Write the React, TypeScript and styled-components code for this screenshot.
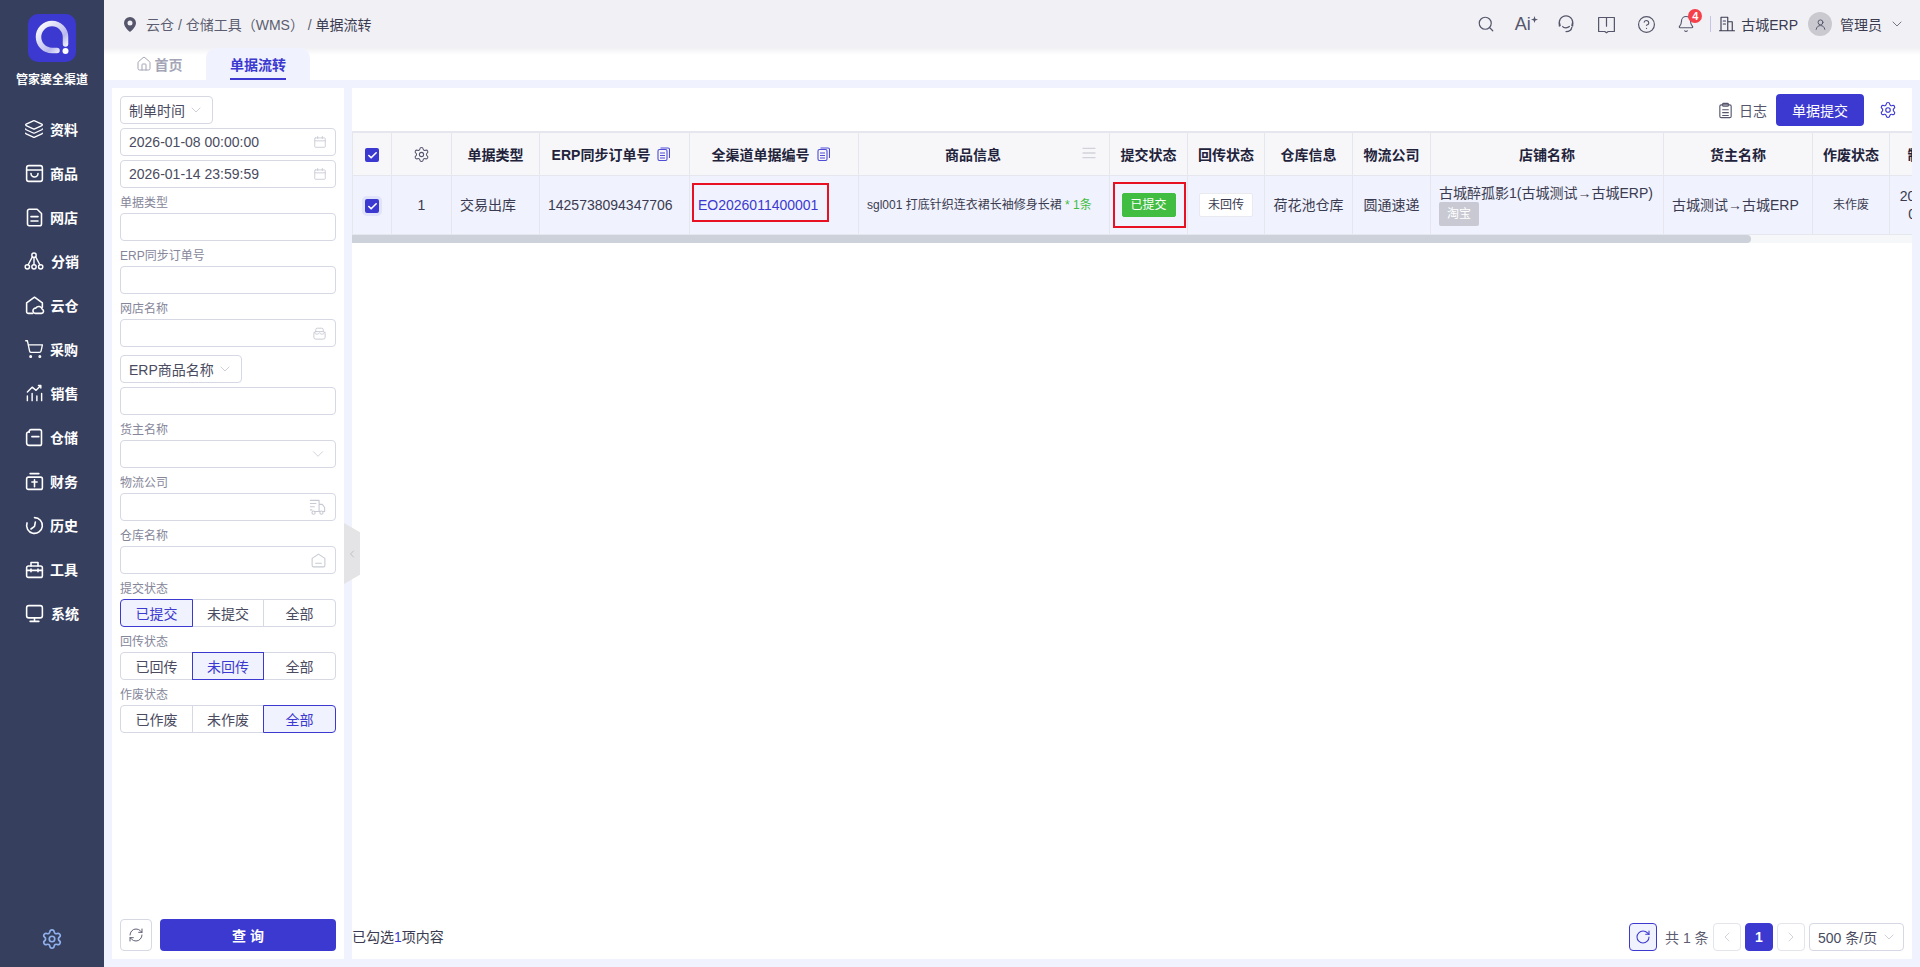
import React from 'react';
import styled, { createGlobalStyle } from 'styled-components';
import { Search, CircleHelp, Bell, ShoppingCart, Layers, ChevronDown, ChevronLeft, ChevronRight, Settings, RefreshCw, RotateCw, Check, House } from 'lucide-react';

const BLUE = '#3c39d0';
const PALE = '#f0f2fd';
const LINE = '#d6d8e3';
const TEXT = '#3a3b50';
const FONT = '"Liberation Sans", "Noto Sans CJK SC", sans-serif';

const Global = createGlobalStyle`
  html, body { margin: 0; padding: 0; height: 100%; overflow: hidden; }
  body { font-family: ${FONT}; font-size: 14px; color: ${TEXT}; background: ${PALE}; }
  * { box-sizing: border-box; }
`;

const Page = styled.div`display: flex; height: 967px; width: 1920px; overflow: hidden;`;

/* ---------- sidebar ---------- */
const Sidebar = styled.aside`
  width: 104px; flex: none; background: #373f5f; color: #fff;
  display: flex; flex-direction: column; align-items: center; padding: 14px 0 17px;
`;
const LogoBox = styled.div`
  width: 48px; height: 48px; border-radius: 10px; background: ${BLUE};
  display: flex; align-items: center; justify-content: center;
`;
const Brand = styled.div`font-size: 12px; font-weight: 700; line-height: 14px; margin: 11px 0 20px; white-space: nowrap;`;
const Nav = styled.nav`display: flex; flex-direction: column; width: 100%;`;
const NavItem = styled.div`
  height: 44px; display: flex; align-items: center; justify-content: center; gap: 8px;
  font-size: 14px; font-weight: 700; color: #fff;
`;
const NavIcon = styled.span<{ $w?: number }>`
  width: ${p => p.$w ?? 16}px; height: 20px; flex: none; display: flex; align-items: center; justify-content: center;
  svg { flex: none; }
`;
const SideFoot = styled.div`margin-top: auto; color: #8fb2ee; height: 22px; display: flex;`;

/* ---------- top ---------- */
const Column = styled.div`flex: 1; min-width: 0; display: flex; flex-direction: column;`;
const Topbar = styled.header`
  height: 48px; flex: none; background: #f1f1f5; display: flex; align-items: center;
  padding: 0 15px 0 20px;
`;
const Crumbs = styled.div`display: flex; align-items: center; gap: 10px; color: #5c5d70; font-size: 14px; white-space: pre;`;
const CrumbNow = styled.span`color: #3a3b50;`;
const TopRight = styled.div`margin-left: auto; display: flex; align-items: center;`;
const TopSlot = styled.div`
  width: 40px; height: 32px; display: flex; align-items: center; justify-content: center;
  position: relative; color: #55566c;
`;
const AiMark = styled.span`font-size: 18px; line-height: 20px; color: #55566c; letter-spacing: 0;`;
const Badge = styled.span`
  position: absolute; left: 22px; top: 1px; width: 14px; height: 14px; border-radius: 50%;
  background: #f5404a; color: #fff; font-size: 11px; font-weight: 700; line-height: 14px; text-align: center;
`;
const Divider = styled.span`width: 1px; height: 16px; background: #c3c6e2; margin: 0 7px 0 4px;`;
const OrgName = styled.span`margin-left: 5px; font-size: 14px; color: #3a3b50; white-space: nowrap;`;
const Avatar = styled.span`
  width: 24px; height: 24px; border-radius: 50%; background: #c9c9cf; margin-left: 10px; color: #55566c;
  display: flex; align-items: center; justify-content: center;
`;
const UserName = styled.span`margin: 0 7px 0 8px; color: #3a3b50; white-space: nowrap;`;

const TabRow = styled.div`
  height: 32px; flex: none; display: flex; padding-left: 20px; gap: 12px;
  background: linear-gradient(#f1f1f5 0, #fff 7px, #fff 100%);
`;
const Tab = styled.div<{ $active?: boolean }>`
  display: flex; align-items: center; justify-content: center; gap: 3px; height: 32px;
  width: ${p => (p.$active ? 104 : 70)}px; border-radius: 10px 10px 0 0; font-weight: 700; font-size: 14px;
  color: ${p => (p.$active ? BLUE : '#a3a5b6')};
  background: ${p => (p.$active ? PALE : 'transparent')};
  position: relative;
`;
const TabBar = styled.span`position: absolute; left: 24px; right: 24px; bottom: 0; height: 2px; background: ${BLUE};`;

/* ---------- content ---------- */
const Content = styled.div`flex: 1; min-height: 0; display: flex; gap: 8px; padding: 8px; background: ${PALE};`;
const Filter = styled.section`
  width: 232px; flex: none; background: #fff; padding: 8px; display: flex; flex-direction: column; position: relative;
`;
const Field = styled.div<{ $gap?: number }>`
  height: 28px; flex: none; border: 1px solid ${LINE}; border-radius: 4px; background: #fff; width: 100%;
  display: flex; align-items: center; padding: 0 8px; margin-top: ${p => p.$gap ?? 0}px;
  color: #4a4b60; font-size: 14px; white-space: nowrap;
`;
const Picker = styled(Field)`width: auto; align-self: flex-start; gap: 3px;`;
const FieldIcon = styled.span`margin-left: auto; display: flex; color: #c8cad3;`;
const Label = styled.div`height: 25px; flex: none; font-size: 12px; line-height: 18px; padding-top: 6px; color: #85869a;`;
const Segments = styled.div`display: grid; grid-template-columns: 73px 71px 72px; flex: none; height: 28px;`;
const Seg = styled.div<{ $on?: boolean; $pos: 'l' | 'm' | 'r' }>`
  display: flex; align-items: center; justify-content: center; font-size: 14px;
  border: 1px solid ${p => (p.$on ? BLUE : LINE)};
  margin-left: ${p => (p.$pos === 'l' ? 0 : -1)}px; z-index: ${p => (p.$on ? 1 : 0)};
  border-radius: ${p => (p.$pos === 'l' ? '4px 0 0 4px' : p.$pos === 'r' ? '0 4px 4px 0' : '0')};
  background: ${p => (p.$on ? PALE : '#fff')};
  color: ${p => (p.$on ? BLUE : '#4a4b60')};
`;
const Actions = styled.div`margin-top: auto; display: flex; gap: 8px; height: 32px;`;
const IconBtn = styled.div`
  width: 32px; border: 1px solid ${LINE}; border-radius: 4px; color: #55566c;
  display: flex; align-items: center; justify-content: center;
`;
const QueryBtn = styled.div`
  flex: 1; background: ${BLUE}; color: #fff; border-radius: 4px; font-weight: 700; padding-left: 4px;
  display: flex; align-items: center; justify-content: center; letter-spacing: 4px; font-size: 14px;
`;
const Handle = styled.div`
  position: absolute; left: 232px; top: 435px; width: 16px; height: 61px; background: #e4e4e6; z-index: 5;
  clip-path: polygon(0 0, 100% 15%, 100% 85%, 0 100%); color: #a5a6b0;
  display: flex; align-items: center; justify-content: center;
`;

const Main = styled.section`flex: 1; min-width: 0; background: #fff; display: flex; flex-direction: column;`;
const Toolbar = styled.div`
  height: 43px; flex: none; display: flex; justify-content: flex-end; align-items: flex-start;
  padding: 6px 15px 0 0;
`;
const LogLink = styled.div`display: flex; align-items: center; gap: 5px; height: 32px; color: #55566c; margin-right: 9px;`;
const SubmitBtn = styled.div`
  width: 88px; height: 32px; background: ${BLUE}; color: #fff; border-radius: 4px; font-size: 14px;
  display: flex; align-items: center; justify-content: center;
`;
const GearBtn = styled.div`height: 32px; display: flex; align-items: center; margin-left: 15px; color: ${BLUE};`;

const TableWrap = styled.div`overflow: hidden; border-top: 2px solid #e6e7ee; flex: none;`;
const Table = styled.table`
  border-collapse: separate; border-spacing: 0; table-layout: fixed; width: 1630px;
`;
const Th = styled.th<{ $shift?: number }>`
  height: 43px; padding: 0 ${p => 4 + (p.$shift ?? 0)}px 0 4px; background: #f7f7fa; font-size: 14px; font-weight: 700; color: #22233a;
  border-right: 1px solid #e6e7ee; border-bottom: 1px solid #e6e7ee; text-align: center; white-space: nowrap;
  position: relative;
  &:first-child { border-left: 1px solid #e6e7ee; }
`;
const Td = styled.td<{ $align?: string; $size?: number }>`
  height: 59px; padding: 0 8px; background: ${PALE}; color: ${TEXT}; position: relative;
  font-size: ${p => p.$size ?? 14}px; text-align: ${p => p.$align ?? 'center'};
  border-right: 1px solid #e6e7ee; border-bottom: 1px solid #e6e7ee; line-height: 18px;
  &:first-child { border-left: 1px solid #e6e7ee; }
`;
const HeadInner = styled.span`display: inline-flex; align-items: center; gap: 7px; vertical-align: middle;`;
const ColTool = styled.span`position: absolute; right: 12px; top: 12px; color: #d2d3da; display: flex;`;
const Box = styled.span<{ $halo?: boolean }>`
  display: inline-flex; width: 14px; height: 14px; border-radius: 2px; background: ${BLUE}; color: #fff;
  align-items: center; justify-content: center; vertical-align: middle;
  box-shadow: ${p => (p.$halo ? '0 0 0 3px #e1e3fa' : 'none')};
`;
const CodeLink = styled.span`color: ${BLUE}; white-space: nowrap;`;
const Green = styled.span`color: #41bd41;`;
const StatusTag = styled.span<{ $on?: boolean }>`
  display: inline-block; width: 54px; height: 24px; line-height: 22px; border-radius: 2px; font-size: 12px; text-align: center;
  background: ${p => (p.$on ? '#41bd41' : '#fff')}; color: ${p => (p.$on ? '#fff' : TEXT)};
  border: 1px solid ${p => (p.$on ? '#41bd41' : '#e9eaf0')}; vertical-align: middle;
`;
const RedBox = styled.span`position: absolute; border: 2px solid #e81123; pointer-events: none;`;
const ShopLine = styled.div`white-space: nowrap;`;
const PlatTag = styled.span`
  display: block; width: 40px; height: 24px; line-height: 24px; border-radius: 2px; background: #c8c9d2;
  color: #fff; font-size: 12px; text-align: center;
`;
const Track = styled.div`height: 8px; flex: none; background: #f6f7f9;`;
const Thumb = styled.div`height: 8px; width: 1399px; border-radius: 0 4px 4px 0; background: #cdd2da;`;

const Footer = styled.div`
  margin-top: auto; height: 36px; flex: none; padding: 0 8px 8px 0; display: flex; align-items: center; justify-content: space-between;
`;
const Chosen = styled.div`font-size: 14px; color: ${TEXT}; padding-bottom: 2px;`;
const Accent = styled.span`color: ${BLUE};`;
const Pager = styled.div`display: flex; align-items: center; gap: 4px;`;
const PageBtn = styled.div<{ $kind?: 'cur' | 'ref' }>`
  width: 28px; height: 28px; border-radius: 4px; display: flex; align-items: center; justify-content: center; font-weight: 700;
  border: 1px solid ${p => (p.$kind === 'cur' || p.$kind === 'ref' ? BLUE : '#e3e4ec')};
  background: ${p => (p.$kind === 'cur' ? BLUE : p.$kind === 'ref' ? PALE : '#fff')};
  color: ${p => (p.$kind === 'cur' ? '#fff' : p.$kind === 'ref' ? BLUE : '#c8c9d2')};
`;
const Total = styled.span`color: #5c5d70; margin: 0 0 0 4px; white-space: nowrap; width: 44px;`;
const SizeSel = styled.div`
  width: 95px; height: 28px; border: 1px solid ${LINE}; border-radius: 4px; display: flex; align-items: center;
  justify-content: space-between; padding: 0 6px 0 8px; color: #4a4b60; white-space: nowrap;
`;

/* ---------- drawings ---------- */
const Svg: React.FC<{ s?: number; w?: number; children: React.ReactNode }> = ({ s = 21, w = 1.8, children }) => (
  <svg width={s} height={s} viewBox="0 0 24 24" fill="none" stroke="currentColor" strokeWidth={w} strokeLinecap="round" strokeLinejoin="round">{children}</svg>
);
const Logo = () => (
  <svg width="48" height="48" viewBox="0 0 48 48" fill="none">
    <defs>
      <linearGradient id="lg" x1="0" y1="0" x2="1" y2="1">
        <stop offset="0" stopColor="#fff" />
        <stop offset="0.7" stopColor="#b9b8ee" />
        <stop offset="1" stopColor="#fff" />
      </linearGradient>
    </defs>
    <path d="M37.5 30V23a13.5 13.5 0 1 0-13.5 13.5h5" stroke="url(#lg)" strokeWidth="5.5" strokeLinecap="round" />
    <circle cx="37.5" cy="37" r="3" fill="#fff" />
  </svg>
);
const GoodsIcon = () => <Svg><rect x="3" y="3" width="18" height="18" rx="2.5" /><path d="M3 8h18M8 12a4 4 0 0 0 8 0" /></Svg>;
const ShopIcon = () => <Svg><path d="M6 2.500h9l5 5v12a2 2 0 0 1-2 2H6a2 2 0 0 1-2-2v-15a2 2 0 0 1 2-2z" /><path d="M8 11h8M8 16h8" /></Svg>;
const DistIcon = () => <Svg s={20} w={1.7}><circle cx="12" cy="5" r="2.600" /><circle cx="4" cy="19" r="2.600" /><circle cx="12" cy="19" r="2.600" /><circle cx="20" cy="19" r="2.600" /><path d="M12 8v8M10 7l-5 9.500M14 7l5 9.500" /></Svg>;
const CloudIcon = () => <Svg><path d="M10 21H5a2 2 0 0 1-2-2V9l9-6.500L21 9v5" /><path d="M13 21a3 3 0 0 1 .5-6 4 4 0 0 1 7.300 1.200A2.500 2.500 0 0 1 20 21z" /></Svg>;
const SaleIcon = () => <Svg s={19}><path d="M3 21v-6M9 21v-9M15 21v-6M21 21v-9" /><path d="M3 10l6-6 5 4 6-6M17 2h3v3" /></Svg>;
const StoreIcon = () => <Svg><path d="M6 6V5a2 2 0 0 1 2-2h10a2 2 0 0 1 2 2v14a2 2 0 0 1-2 2H6a3 3 0 0 1-3-3V8a2 2 0 0 1 3-2z" /><path d="M9 11h8" /></Svg>;
const FinanceIcon = () => <Svg><rect x="3" y="7" width="18" height="14" rx="2" /><path d="M7 3h10M12 10v8M9 12.500h6" /></Svg>;
const HistoryIcon = () => <Svg><path d="M12 3a9 9 0 1 1-8.500 6" /><path d="M13 8l-1 5-4 3" /></Svg>;
const ToolIcon = () => <Svg><rect x="3" y="8" width="18" height="13" rx="2" /><path d="M8 8V4h8v4M3 13h18M8 11.500v3M16 11.500v3" /></Svg>;
const MonitorIcon = () => <Svg><rect x="3" y="3" width="18" height="14" rx="2.500" /><path d="M12 17v4M7 21h10" /></Svg>;
const Pin = () => (
  <svg width="12" height="15" viewBox="0 0 12 15"><path fill="#55566c" fillRule="evenodd" d="M6 0a6 6 0 0 1 6 6c0 3.500-4 7.600-6 9-2-1.400-6-5.500-6-9a6 6 0 0 1 6-6zm0 3.500a2.500 2.500 0 1 0 0 5 2.500 2.500 0 0 0 0-5z" /></svg>
);
const Sparkle = () => (
  <svg width="7" height="7" viewBox="0 0 8 8" style={{ marginTop: -10 }}><path fill="#55566c" d="M4 0l1 3 3 1-3 1-1 3-1-3-3-1 3-1z" /></svg>
);
const HeadsetIcon = () => <Svg s={20} w={1.5}><path d="M5 14a8 8 0 1 1 14 0" /><path d="M4 10.500v4M20 10.500v4M8 15c1 2 6 2 8 0M19 16c-.5 3-3.500 5-7 5" /></Svg>;
const BookIcon = () => <Svg s={21} w={1.4}><path d="M3 4h18v16H14l-2 1.500L10 20H3z" /><path d="M12 4v10" /></Svg>;
const BuildingIcon = () => <Svg s={18} w={1.5}><path d="M2 21h20M4 21V3h9v18M13 9h6v12M7 8h3M7 12h3" /></Svg>;
const UserIcon = () => <Svg s={13}><circle cx="12" cy="8" r="4.500" /><path d="M4 21c1-5 4-7 8-7s7 2 8 7" /></Svg>;
const CalIcon = () => <Svg s={14} w={1.5}><rect x="3" y="5" width="18" height="16" rx="1" /><path d="M3 10h18M8 2.500V6M16 2.500V6" /></Svg>;
const BasketIcon = () => <Svg s={15} w={1.5}><rect x="3" y="9" width="18" height="12" rx="3" /><path d="M6 9V6a2.500 2.500 0 0 1 2.500-2.500h7A2.500 2.500 0 0 1 18 6v3M3 10c3 4 6 4 9 1 3 3 6 3 9-1" /></Svg>;
const TruckIcon = () => <Svg s={19} w={1.4}><path d="M3 3h11v14H8M3 7h7M3 11h5M3 15h2M14 8h4l3 4v5h-2M14 17h1" /><circle cx="7" cy="18.500" r="2" /><circle cx="17" cy="18.500" r="2" /></Svg>;
const HomeBoxIcon = () => <Svg s={17} w={1.5}><path d="M3 9l9-6 9 6v10a2 2 0 0 1-2 2H5a2 2 0 0 1-2-2z" /><path d="M8 16h8" /></Svg>;
const ClipIcon = () => <Svg s={17} w={1.6}><rect x="4" y="4" width="16" height="18" rx="2" /><rect x="8" y="2" width="8" height="4" rx="1" /><path d="M8 11h8M8 15h8M8 19h8" /></Svg>;
const CopyIcon = () => (
  <svg width="13" height="14" viewBox="0 0 13 14" fill="none" stroke="#4f4dd8" strokeWidth="1.1">
    <rect x="1" y="2.500" width="9" height="11" rx="1.500" /><path d="M3.500 1H11a1.500 1.500 0 0 1 1.500 1.500V11M3 6h5M3 8.500h5M3 11h5" />
  </svg>
);
const Lines = () => <Svg s={16} w={2}><path d="M3 5h18M3 12h18M3 19h18" /></Svg>;

const navs: [React.ReactNode, string, number?][] = [
  [<Layers size={20} strokeWidth={1.6} />, '资料'],
  [<GoodsIcon />, '商品'],
  [<ShopIcon />, '网店'],
  [<DistIcon />, '分销', 18],
  [<CloudIcon />, '云仓', 17],
  [<ShoppingCart size={20} strokeWidth={1.6} />, '采购'],
  [<SaleIcon />, '销售', 17],
  [<StoreIcon />, '仓储'],
  [<FinanceIcon />, '财务'],
  [<HistoryIcon />, '历史'],
  [<ToolIcon />, '工具'],
  [<MonitorIcon />, '系统', 18],
];
const widths = [40, 60, 88, 150, 169, 251, 78, 77, 88, 78, 233, 149, 77, 92];

const SegGroup: React.FC<{ items: string[]; on: number }> = ({ items, on }) => (
  <Segments>
    {items.map((t, i) => (
      <Seg key={t} $on={i === on} $pos={i === 0 ? 'l' : i === 2 ? 'r' : 'm'}>{t}</Seg>
    ))}
  </Segments>
);

export default function App() {
  return (
    <Page>
      <Global />
      <Sidebar>
        <LogoBox><Logo /></LogoBox>
        <Brand>管家婆全渠道</Brand>
        <Nav>
          {navs.map(([icon, name, w]) => <NavItem key={name}><NavIcon $w={w}>{icon}</NavIcon><span>{name}</span></NavItem>)}
        </Nav>
        <SideFoot><Settings size={22} strokeWidth={1.8} /></SideFoot>
      </Sidebar>
      <Column>
        <Topbar>
          <Crumbs>
            <Pin />
            <span>云仓 / 仓储工具（WMS） / <CrumbNow>单据流转</CrumbNow></span>
          </Crumbs>
          <TopRight>
            <TopSlot><Search size={18} strokeWidth={1.6} /></TopSlot>
            <TopSlot><AiMark>Ai</AiMark><Sparkle /></TopSlot>
            <TopSlot><HeadsetIcon /></TopSlot>
            <TopSlot><BookIcon /></TopSlot>
            <TopSlot><CircleHelp size={19} strokeWidth={1.5} /></TopSlot>
            <TopSlot><Bell size={18} strokeWidth={1.5} /><Badge>4</Badge></TopSlot>
            <Divider />
            <BuildingIcon />
            <OrgName>古城ERP</OrgName>
            <Avatar><UserIcon /></Avatar>
            <UserName>管理员</UserName>
            <ChevronDown size={16} strokeWidth={1.2} color="#55566c" />
          </TopRight>
        </Topbar>
        <TabRow>
          <Tab><House size={16} strokeWidth={1.5} />首页</Tab>
          <Tab $active>单据流转<TabBar /></Tab>
        </TabRow>
        <Content>
          <Filter>
            <Picker>制单时间<ChevronDown size={16} strokeWidth={1} color="#b5b7c3" /></Picker>
            <Field $gap={4}>2026-01-08 00:00:00<FieldIcon><CalIcon /></FieldIcon></Field>
            <Field $gap={4}>2026-01-14 23:59:59<FieldIcon><CalIcon /></FieldIcon></Field>
            <Label>单据类型</Label>
            <Field />
            <Label>ERP同步订单号</Label>
            <Field />
            <Label>网店名称</Label>
            <Field><FieldIcon><BasketIcon /></FieldIcon></Field>
            <Picker $gap={8}>ERP商品名称<ChevronDown size={16} strokeWidth={1} color="#b5b7c3" /></Picker>
            <Field $gap={4} />
            <Label>货主名称</Label>
            <Field><FieldIcon><ChevronDown size={18} strokeWidth={1.1} /></FieldIcon></Field>
            <Label>物流公司</Label>
            <Field><FieldIcon><TruckIcon /></FieldIcon></Field>
            <Label>仓库名称</Label>
            <Field><FieldIcon><HomeBoxIcon /></FieldIcon></Field>
            <Label>提交状态</Label>
            <SegGroup items={['已提交', '未提交', '全部']} on={0} />
            <Label>回传状态</Label>
            <SegGroup items={['已回传', '未回传', '全部']} on={1} />
            <Label>作废状态</Label>
            <SegGroup items={['已作废', '未作废', '全部']} on={2} />
            <Actions>
              <IconBtn><RefreshCw size={16} strokeWidth={1.4} /></IconBtn>
              <QueryBtn>查询</QueryBtn>
            </Actions>
            <Handle><ChevronLeft size={12} strokeWidth={1.2} /></Handle>
          </Filter>
          <Main>
            <Toolbar>
              <LogLink><ClipIcon />日志</LogLink>
              <SubmitBtn>单据提交</SubmitBtn>
              <GearBtn><Settings size={18} strokeWidth={1.5} /></GearBtn>
            </Toolbar>
            <TableWrap>
              <Table>
                <colgroup>{widths.map((w, i) => <col key={i} style={{ width: w }} />)}</colgroup>
                <thead>
                  <tr>
                    <Th><Box><Check size={11} strokeWidth={3.5} /></Box></Th>
                    <Th><HeadInner><Settings size={17} strokeWidth={1.5} color="#55566c" /></HeadInner></Th>
                    <Th>单据类型</Th>
                    <Th $shift={7}><HeadInner>ERP同步订单号<CopyIcon /></HeadInner></Th>
                    <Th $shift={7}><HeadInner>全渠道单据编号<CopyIcon /></HeadInner></Th>
                    <Th $shift={22}>商品信息<ColTool><Lines /></ColTool></Th>
                    <Th>提交状态</Th>
                    <Th>回传状态</Th>
                    <Th>仓库信息</Th>
                    <Th>物流公司</Th>
                    <Th>店铺名称</Th>
                    <Th>货主名称</Th>
                    <Th>作废状态</Th>
                    <Th>制单时间</Th>
                  </tr>
                </thead>
                <tbody>
                  <tr>
                    <Td><Box $halo><Check size={11} strokeWidth={3.5} /></Box></Td>
                    <Td>1</Td>
                    <Td $align="left">交易出库</Td>
                    <Td $align="left">1425738094347706</Td>
                    <Td $align="left"><CodeLink>EO2026011400001</CodeLink><RedBox style={{ left: 2, top: 7, width: 137, height: 39 }} /></Td>
                    <Td $align="left" $size={12}>sgl001 打底针织连衣裙长袖修身长裙 <Green>* 1条</Green></Td>
                    <Td><StatusTag $on>已提交</StatusTag><RedBox style={{ left: 3, top: 6, width: 73, height: 46 }} /></Td>
                    <Td><StatusTag>未回传</StatusTag></Td>
                    <Td>荷花池仓库</Td>
                    <Td>圆通速递</Td>
                    <Td $align="left"><ShopLine>古城醉孤影1(古城测试→古城ERP)</ShopLine><PlatTag>淘宝</PlatTag></Td>
                    <Td $align="left">古城测试→古城ERP</Td>
                    <Td $size={12}>未作废</Td>
                    <Td>2026-01-14 00:00:00</Td>
                  </tr>
                </tbody>
              </Table>
            </TableWrap>
            <Track><Thumb /></Track>
            <Footer>
              <Chosen>已勾选<Accent>1</Accent>项内容</Chosen>
              <Pager>
                <PageBtn $kind="ref"><RotateCw size={16} strokeWidth={1.6} /></PageBtn>
                <Total>共 1 条</Total>
                <PageBtn><ChevronLeft size={16} strokeWidth={1.2} /></PageBtn>
                <PageBtn $kind="cur">1</PageBtn>
                <PageBtn><ChevronRight size={16} strokeWidth={1.2} /></PageBtn>
                <SizeSel>500 条/页<ChevronDown size={16} strokeWidth={1} color="#b5b7c3" /></SizeSel>
              </Pager>
            </Footer>
          </Main>
        </Content>
      </Column>
    </Page>
  );
}
